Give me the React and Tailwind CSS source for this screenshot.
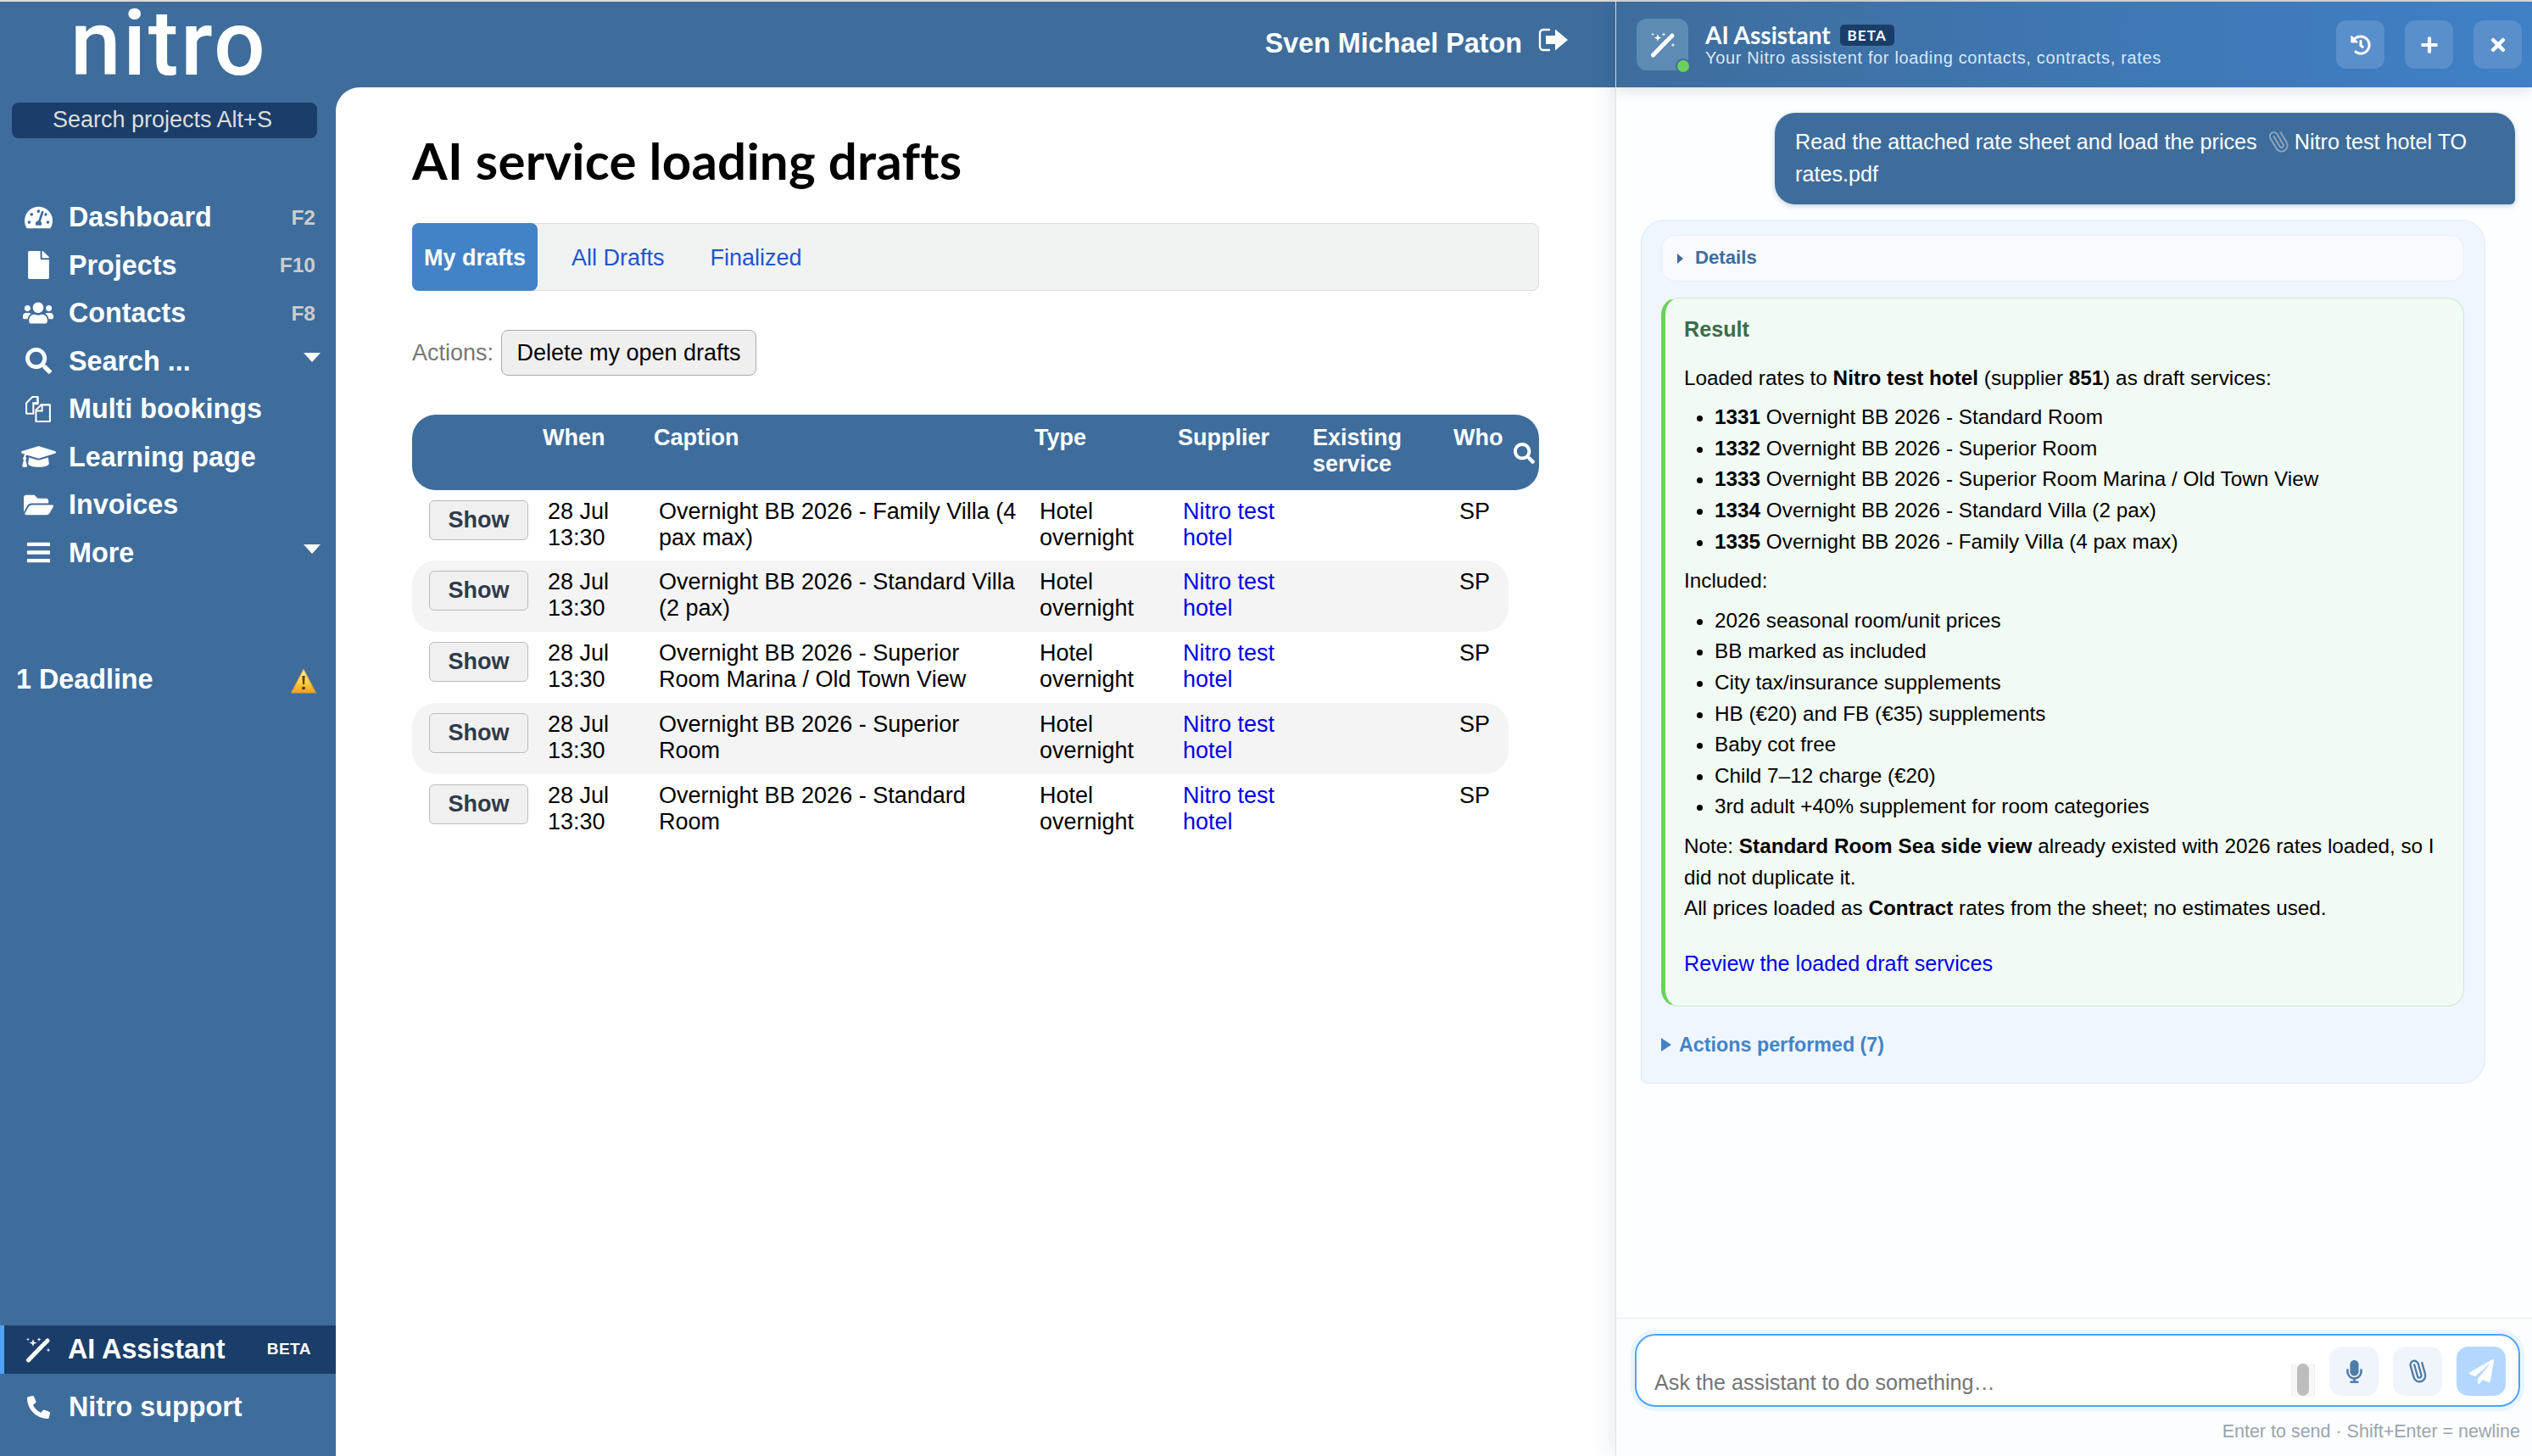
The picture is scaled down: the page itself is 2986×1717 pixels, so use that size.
import React from "react";
import {
  FaTachometerAlt, FaFile, FaUsers, FaSearch, FaGraduationCap, FaFolderOpen, FaBars,
  FaPhoneAlt, FaHistory, FaPlus, FaTimes, FaMicrophone, FaPaperPlane,
} from "react-icons/fa";
import { Paperclip } from "lucide-react";

const FilesIcon = () => (
  <svg viewBox="0 0 32 32" className="w-[33px] h-[33px]" fill="none" stroke="white" strokeWidth="2">
    <path d="M2 21V9l7-7h6v8l-5 0 0 11z" strokeLinejoin="round" />
    <path d="M15 2v7h-6" />
    <path d="M13 30V17l6-6h10v19z" strokeLinejoin="round" />
    <path d="M20 11v7h-7" />
  </svg>
);

const Star = ({ x, y, r }) => (
  <path d={`M${x} ${y - r}L${x + r * 0.25} ${y - r * 0.25}L${x + r} ${y}L${x + r * 0.25} ${y + r * 0.25}L${x} ${y + r}L${x - r * 0.25} ${y + r * 0.25}L${x - r} ${y}L${x - r * 0.25} ${y - r * 0.25}Z`} fill="white" />
);

const Wand = ({ className }) => (
  <svg viewBox="0 0 30 30" className={className}>
    <line x1="3.500" y1="27" x2="20" y2="10" stroke="white" strokeWidth="5" strokeLinecap="round" />
    <line x1="22" y1="8" x2="26" y2="4" stroke="white" strokeWidth="5" strokeLinecap="round" />
    <Star x={9} y={6.500} r={4.500} />
    <Star x={16} y={2.500} r={2.500} />
    <Star x={3} y={2.500} r={2} />
    <Star x={27} y={15} r={2.500} />
  </svg>
);

const Caret = () => (
  <span className="w-0 h-0 border-x-[10px] border-x-transparent border-t-[11px] border-t-white" />
);

const WarnIcon = () => (
  <svg viewBox="0 0 30 30" className="w-[30px] h-[30px]">
    <defs>
      <linearGradient id="warn" x1="0" y1="0" x2="0" y2="1">
        <stop offset="0" stopColor="#fff3a8" />
        <stop offset="0.6" stopColor="#f8cc3c" />
        <stop offset="1" stopColor="#f0a020" />
      </linearGradient>
    </defs>
    <path d="M15 1 29.500 29H.5z" fill="url(#warn)" stroke="#e09a30" strokeWidth="1" strokeLinejoin="round" />
    <path d="M13.400 9h3.200l-.6 10h-2z" fill="#6b3a10" />
    <circle cx="15" cy="23.500" r="2" fill="#6b3a10" />
  </svg>
);

const nav = [
  { label: "Dashboard", icon: <FaTachometerAlt size={33} />, key: "F2" },
  { label: "Projects", icon: <FaFile size={33} />, key: "F10" },
  { label: "Contacts", icon: <FaUsers size={36} />, key: "F8" },
  { label: "Search ...", icon: <FaSearch size={31} />, caret: true },
  { label: "Multi bookings", icon: <FilesIcon /> },
  { label: "Learning page", icon: <FaGraduationCap size={41} /> },
  { label: "Invoices", icon: <FaFolderOpen size={35} /> },
  { label: "More", icon: <FaBars size={31} />, caret: true },
];

const rows = [
  "Overnight BB 2026 - Family Villa (4 pax max)",
  "Overnight BB 2026 - Standard Villa (2 pax)",
  "Overnight BB 2026 - Superior Room Marina / Old Town View",
  "Overnight BB 2026 - Superior Room",
  "Overnight BB 2026 - Standard Room",
];

const services = [
  ["1331", "Overnight BB 2026 - Standard Room"],
  ["1332", "Overnight BB 2026 - Superior Room"],
  ["1333", "Overnight BB 2026 - Superior Room Marina / Old Town View"],
  ["1334", "Overnight BB 2026 - Standard Villa (2 pax)"],
  ["1335", "Overnight BB 2026 - Family Villa (4 pax max)"],
];

const included = [
  "2026 seasonal room/unit prices",
  "BB marked as included",
  "City tax/insurance supplements",
  "HB (€20) and FB (€35) supplements",
  "Baby cot free",
  "Child 7–12 charge (€20)",
  "3rd adult +40% supplement for room categories",
];

const Sidebar = () => (
  <aside className="w-[396px] shrink-0 flex flex-col text-white">
    <div className="h-[100px] pl-[83px] font-['Roboto',sans-serif] font-medium text-[107px] leading-[100px] tracking-[2.5px] mb-[19px]">nitro</div>
    <div className="ml-[14px] mr-[22px] h-[42px] rounded-[8px] bg-[#1a3e69] text-[#dddddd] text-[27px] leading-[40px] pl-[48px]">Search projects Alt+S</div>
    <nav className="mt-[65px] flex flex-col">
      {nav.map((n) => (
        <div key={n.label} className="h-[56.5px] flex items-center">
          <span className="w-[90px] flex justify-center shrink-0">{n.icon}</span>
          <span className="-ml-[9px] flex-1 font-bold text-[32.3px] leading-none">{n.label}</span>
          {n.key && <span className="pr-[24px] pt-[2px] font-bold text-[#cccccc] text-[24.5px]">{n.key}</span>}
          {n.caret && <span className="pr-[18px] flex -mt-[8px]"><Caret /></span>}
        </div>
      ))}
    </nav>
    <div className="mt-[101px] pl-[19px] pr-[23px] flex items-center justify-between">
      <span className="font-bold text-[32.3px] leading-[40px]">1 Deadline</span>
      <span className="mt-[3px]"><WarnIcon /></span>
    </div>
    <div className="mt-auto h-[57px] flex items-center bg-[#1a3e69] border-l-[5px] border-l-[#4fa3ff]">
      <span className="w-[75px] pl-[25px] shrink-0"><Wand className="w-[30px] h-[30px]" /></span>
      <span className="flex-1 font-bold text-[32.3px]">AI Assistant</span>
      <span className="pr-[29px] font-bold text-[19px] tracking-[0.5px]">BETA</span>
    </div>
    <div className="h-[78px] mb-[19px] flex items-center">
      <span className="w-[81px] pl-[32px] shrink-0"><FaPhoneAlt size={27} /></span>
      <span className="font-bold text-[32.3px]">Nitro support</span>
    </div>
  </aside>
);

const SignOut = () => (
  <svg viewBox="0 0 36 28" className="w-[36px] h-[28px]" fill="white">
    <path d="M13 2H6a4 4 0 0 0-4 4v16a4 4 0 0 0 4 4h7" fill="none" stroke="white" strokeWidth="2.400" strokeLinecap="round" />
    <path d="M9 9h11V1.500L35 14 20 26.500V19H9z" />
  </svg>
);

const Drafts = () => (
  <div className="flex-1 flex flex-col min-h-0 bg-white rounded-tl-[28px] px-[90px]">
    <h1 className="mt-[56px] h-[60px] text-[60px] leading-[60px] font-bold text-black font-['Lato',sans-serif] tracking-[0.25px] whitespace-nowrap">AI service loading drafts</h1>
    <div className="mt-[44px] h-[80px] flex items-stretch bg-[#f1f3f3] border border-[#dddddd] rounded-[8px] text-[27px]">
      <span className="-m-px w-[148px] pt-[2px] flex items-center justify-center rounded-[8px] bg-[#4283c8] text-white font-bold">My drafts</span>
      <span className="ml-[41px] pt-[2px] flex items-center text-[#1f55d0]">All Drafts</span>
      <span className="ml-[54px] pt-[2px] flex items-center text-[#1f55d0]">Finalized</span>
    </div>
    <div className="mt-[46px] h-[54px] flex items-center text-[27px]">
      <span className="text-[#777777] w-[105px]">Actions:</span>
      <button className="h-[54px] w-[301px] rounded-[8px] bg-[#efefef] border border-[#aaaaaa] text-black">Delete my open drafts</button>
    </div>
    <div className="mt-[46px] h-[88.7px] rounded-[28px] bg-[#3e6d9c] text-white font-bold text-[27px] leading-[31px] pt-[12px] relative grid grid-cols-[154px_131px_449px_169px_159px_166px_1fr]">
      <span />
      <span>When</span>
      <span>Caption</span>
      <span>Type</span>
      <span>Supplier</span>
      <span>Existing service</span>
      <span>Who</span>
      <FaSearch size={25} className="absolute left-[1299px] top-[33px]" />
    </div>
    {rows.map((caption, i) => (
      <div key={caption} className={`h-[83.8px] w-[1293px] rounded-[28px] pt-[10px] text-[27px] leading-[31px] text-black grid grid-cols-[154px_131px_449px_169px_159px_166px_65px] ${i % 2 === 1 ? "bg-[#f4f4f4]" : ""}`}>
        <span className="pl-[20px] pt-[2px]">
          <button className="w-[117px] h-[47px] rounded-[6px] bg-[#f0f0f0] border border-[#bbbbbb] font-bold text-[#2f3a4a]">Show</button>
        </span>
        <span className="pl-[6px] pr-[40px]">28 Jul 13:30</span>
        <span className="pl-[6px] pr-[15px]">{caption}</span>
        <span className="pl-[6px] pr-[6px]">Hotel overnight</span>
        <span className="pl-[6px] pr-[6px] text-[#0000ee]">Nitro test hotel</span>
        <span />
        <span className="pl-[7px]">SP</span>
      </div>
    ))}
  </div>
);

const Left = () => (
  <div className="w-[1905px] shrink-0 flex bg-[#3e6d9c]">
    <Sidebar />
    <div className="flex-1 flex flex-col min-w-0">
      <header className="h-[101px] shrink-0 flex items-start justify-end pr-[55px] pt-[31px] text-white">
        <span className="font-bold text-[32.3px] leading-[36px]">Sven Michael Paton</span>
        <span className="ml-[19px]"><SignOut /></span>
      </header>
      <Drafts />
    </div>
  </div>
);

const HeadBtn = ({ children }) => (
  <span className="w-[57px] h-[57px] rounded-[12px] bg-[#5a8fcb] flex items-center justify-center text-white">{children}</span>
);

const InputBtn = ({ children, className }) => (
  <span className={`w-[58px] h-[58px] rounded-[14px] flex items-center justify-center ${className}`}>{children}</span>
);

const Panel = () => (
  <div className="flex-1 min-w-0 flex flex-col bg-[#fdfeff] border-l border-l-[#dfe4ea] shadow-[-6px_0_24px_rgba(40,70,110,0.10)] z-10">
    <header className="h-[101px] shrink-0 flex items-center pl-[24px] pr-[12px] bg-gradient-to-r from-[#3e6d9c] to-[#3f80c7] shadow-[0_4px_14px_rgba(40,70,110,0.15)] text-white">
      <span className="relative w-[61px] h-[61px] rounded-[12px] bg-[#5e8bb3] flex items-center justify-center">
        <Wand className="w-[30px] h-[30px]" />
        <span className="absolute -right-[3px] -bottom-[4px] w-[18px] h-[18px] rounded-full bg-[#6cd05f] border-[2px] border-[#3e6f9b]" />
      </span>
      <div className="ml-[20px] flex-1 flex flex-col -mt-[2px]">
        <div className="flex items-center h-[36px]">
          <span className="font-['Lato',sans-serif] font-bold text-[28px]">AI Assistant</span>
          <span className="ml-[11px] w-[64px] h-[25px] text-center rounded-[5px] bg-[#1a3e69] font-['Lato',sans-serif] font-bold text-[17px] leading-[25px] tracking-[1.2px]">BETA</span>
        </div>
        <span className="-mt-[3px] text-[20px] leading-[24px] tracking-[0.65px] text-[#dbe7f3]">Your Nitro assistent for loading contacts, contracts, rates</span>
      </div>
      <div className="flex gap-[24px]">
        <HeadBtn><FaHistory size={24} /></HeadBtn>
        <HeadBtn><FaPlus size={22} /></HeadBtn>
        <HeadBtn><FaTimes size={24} /></HeadBtn>
      </div>
    </header>
    <div className="flex-1 min-h-0 pl-[29px] pr-[20px] pt-[30px] text-[24.3px] leading-[36.6px] text-black">
      <div className="ml-[158px] h-[108px] rounded-[24px] rounded-br-[6px] bg-[#3e6d9c] text-white text-[25.2px] pl-[24px] pr-[30px] pt-[15px] leading-[38.4px] shadow-[0_2px_6px_rgba(40,70,110,0.25)]">
        Read the attached rate sheet and load the prices
        <Paperclip className="inline-block w-[28px] h-[28px] ml-[11px] mr-[5px] -mt-[4px] -rotate-[75deg] text-[#8fa6bd]" strokeWidth={1.6} />
        Nitro test hotel TO rates.pdf
      </div>
      <div className="mt-[18px] w-[996px] h-[1019px] rounded-[28px] rounded-bl-[8px] bg-[#eff6fe] border border-[#dcebf9] pl-[23px] pr-[24px] pt-[17px]">
        <div className="h-[55px] rounded-[16px] bg-[#f7fafe] border border-[#e6eff8] flex items-center pl-[18px] text-[22.2px] font-bold text-[#3e6d9c]">
          <span className="w-0 h-0 border-y-[6px] border-y-transparent border-l-[7px] border-l-[#3e6d9c] mr-[14px]" />
          Details
        </div>
        <div className="mt-[19px] h-[836px] rounded-[20px] bg-[#f1faf3] border border-[#cfe9d4] border-l-[5px] border-l-[#6cd05f] pl-[22px] pr-[20px] pt-[18px]">
          <div className="font-bold text-[25.2px] text-[#3a6e46]">Result</div>
          <p className="mt-[21px]">Loaded rates to <b>Nitro test hotel</b> (supplier <b>851</b>) as draft services:</p>
          <ul className="mt-[10px] list-disc pl-[36px]">
            {services.map(([n, t]) => <li key={n}><b>{n}</b> {t}</li>)}
          </ul>
          <p className="mt-[10px]">Included:</p>
          <ul className="mt-[10px] list-disc pl-[36px]">
            {included.map((t) => <li key={t}>{t}</li>)}
          </ul>
          <p className="mt-[10px]">Note: <b>Standard Room Sea side view</b> already existed with 2026 rates loaded, so I did not duplicate it.</p>
          <p>All prices loaded as <b>Contract</b> rates from the sheet; no estimates used.</p>
          <p className="mt-[28px] text-[25.2px] text-[#0000ee]">Review the loaded draft services</p>
        </div>
        <div className="mt-[27px] flex items-center text-[23.3px] font-bold text-[#4283c8]">
          <span className="w-0 h-0 border-y-[8px] border-y-transparent border-l-[12px] border-l-[#4283c8] mr-[9px]" />
          Actions performed (7)
        </div>
      </div>
    </div>
    <footer className="h-[163px] shrink-0 border-t border-t-[#e6edf5] bg-[#fbfdff] pl-[22px] pr-[14px] pt-[18px]">
      <div className="relative h-[86px] rounded-[24px] border-2 border-[#4fa3ff] bg-white shadow-[0_0_0_5px_#e9f5ff] flex items-start pl-[21px] pr-[15px]">
        <span className="flex-1 mt-[39px] text-[25.2px] leading-[32px] text-[#757575]">Ask the assistant to do something…</span>
        <span className="mt-[33px] w-[28px] h-[39px] bg-[#f7f7f7] border-x border-[#eeeeee] flex justify-center mr-[17px]">
          <span className="w-[14px] h-[38px] rounded-full bg-[#bdbdbd]" />
        </span>
        <InputBtn className="mt-[13px] bg-[#f0f5fc] text-[#4f7ba6]"><FaMicrophone size={27} /></InputBtn>
        <InputBtn className="mt-[13px] ml-[17px] bg-[#f0f5fc] text-[#4f7ba6]"><Paperclip size={28} strokeWidth={2} className="-rotate-[60deg]" /></InputBtn>
        <InputBtn className="mt-[13px] ml-[17px] bg-[#b3d7ff] text-white"><FaPaperPlane size={29} /></InputBtn>
      </div>
      <div className="mt-[16px] text-right text-[21.5px] leading-[26px] text-[#9aa5ae]">Enter to send · Shift+Enter = newline</div>
    </footer>
  </div>
);

export default function App() {
  return (
    <div className="w-[2986px] h-[1717px] overflow-hidden flex flex-col bg-white font-['Liberation_Sans',Arial,sans-serif]">
      <div className="h-[2px] shrink-0 bg-[#dddddd]" />
      <div className="flex-1 min-h-0 flex">
        <Left />
        <Panel />
      </div>
    </div>
  );
}
